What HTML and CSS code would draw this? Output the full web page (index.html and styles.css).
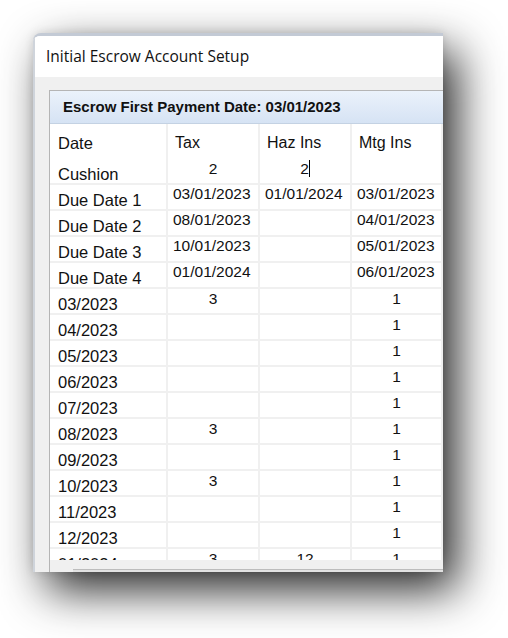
FILE: index.html
```html
<!DOCTYPE html>
<html>
<head>
<meta charset="utf-8">
<link rel="stylesheet" href="styles.css">
</head>
<body>
<div class="page">
  <div class="window">
    <div class="frame-left"></div>
    <div class="main">
      <div class="titlebar">Initial Escrow Account Setup</div>
      <div class="client">
        <div class="panel">
          <div class="panel-head">Escrow First Payment Date: 03/01/2023</div>
          <div class="grid">
            <div class="row head"><div class="c d">Date</div><div class="c h">Tax</div><div class="c h">Haz Ins</div><div class="c h">Mtg Ins</div><div class="c h"></div></div>
            <div class="row"><div class="c d">Cushion</div><div class="c n">2</div><div class="c n"><span class="caret">2</span></div><div class="c n"></div><div class="c n"></div></div>
            <div class="row"><div class="c d">Due Date 1</div><div class="c v">03/01/2023</div><div class="c v">01/01/2024</div><div class="c v">03/01/2023</div><div class="c v"></div></div>
            <div class="row"><div class="c d">Due Date 2</div><div class="c v">08/01/2023</div><div class="c v"></div><div class="c v">04/01/2023</div><div class="c v"></div></div>
            <div class="row"><div class="c d">Due Date 3</div><div class="c v">10/01/2023</div><div class="c v"></div><div class="c v">05/01/2023</div><div class="c v"></div></div>
            <div class="row"><div class="c d">Due Date 4</div><div class="c v">01/01/2024</div><div class="c v"></div><div class="c v">06/01/2023</div><div class="c v"></div></div>
            <div class="row"><div class="c d">03/2023</div><div class="c n">3</div><div class="c n"></div><div class="c n">1</div><div class="c n"></div></div>
            <div class="row"><div class="c d">04/2023</div><div class="c n"></div><div class="c n"></div><div class="c n">1</div><div class="c n"></div></div>
            <div class="row"><div class="c d">05/2023</div><div class="c n"></div><div class="c n"></div><div class="c n">1</div><div class="c n"></div></div>
            <div class="row"><div class="c d">06/2023</div><div class="c n"></div><div class="c n"></div><div class="c n">1</div><div class="c n"></div></div>
            <div class="row"><div class="c d">07/2023</div><div class="c n"></div><div class="c n"></div><div class="c n">1</div><div class="c n"></div></div>
            <div class="row"><div class="c d">08/2023</div><div class="c n">3</div><div class="c n"></div><div class="c n">1</div><div class="c n"></div></div>
            <div class="row"><div class="c d">09/2023</div><div class="c n"></div><div class="c n"></div><div class="c n">1</div><div class="c n"></div></div>
            <div class="row"><div class="c d">10/2023</div><div class="c n">3</div><div class="c n"></div><div class="c n">1</div><div class="c n"></div></div>
            <div class="row"><div class="c d">11/2023</div><div class="c n"></div><div class="c n"></div><div class="c n">1</div><div class="c n"></div></div>
            <div class="row"><div class="c d">12/2023</div><div class="c n"></div><div class="c n"></div><div class="c n">1</div><div class="c n"></div></div>
            <div class="row"><div class="c d">01/2024</div><div class="c n">3</div><div class="c n">12</div><div class="c n">1</div><div class="c n"></div></div>
          </div>
          <div class="hscroll"><div class="thumb"></div></div>
        </div>
      </div>
    </div>
  </div>
</div>
</body>
</html>
```

FILE: styles.css
```css
html, body {
  margin: 0;
  padding: 0;
  background: #ffffff;
}
.page {
  box-sizing: border-box;
  height: 638px;
  padding: 33px 0 0 33px;
}
.window {
  box-sizing: border-box;
  width: 410px;
  height: 539px;
  display: flex;
  overflow: hidden;
  border-top: 3px solid #c3cad5;
  border-top-left-radius: 8px;
  box-shadow: 14px 18px 46px rgba(0, 0, 0, 0.85), 0 0 10px rgba(0, 0, 0, 0.12);
  background: #f0f0f0;
}
.frame-left {
  width: 2px;
  flex: none;
  background: #cfd4db;
}
.main {
  flex: 1;
  min-width: 0;
  display: flex;
  flex-direction: column;
}
.titlebar {
  height: 41px;
  flex: none;
  background: #ffffff;
  padding-left: 11px;
  font-family: "Open Sans", "Noto Sans", sans-serif;
  font-size: 15.5px;
  line-height: 41px;
  color: #111;
}
.client {
  flex: 1;
  min-height: 0;
  background: #f0f0f0;
  padding: 13px 0 0 14px;
  display: flex;
  flex-direction: column;
  overflow: hidden;
}
.panel {
  width: 480px;
  flex: 1;
  display: flex;
  flex-direction: column;
  border-left: 1px solid #b5b5b5;
  border-top: 1px solid #b5b5b5;
  background: #ffffff;
}
.panel-head {
  box-sizing: border-box;
  height: 33px;
  flex: none;
  padding-left: 13px;
  background: linear-gradient(#ebf2fb, #d6e3f4);
  border-bottom: 1px solid #c4d2e3;
  font-family: "Liberation Sans", Arial, sans-serif;
  font-weight: bold;
  font-size: 15px;
  line-height: 32px;
  color: #111;
}
.grid {
  height: 436px;
  flex: none;
  overflow: hidden;
  font-family: "Liberation Sans", Arial, sans-serif;
  color: #111;
}
.row {
  box-sizing: border-box;
  display: grid;
  grid-template-columns: 118px 92px 92px 91px 92px;
  height: 26px;
  border-bottom: 2px solid #f0f0f0;
}
.row.head {
  height: 35px;
  border-bottom: none;
}
.c {
  border-right: 2px solid #f0f0f0;
  white-space: nowrap;
  overflow: hidden;
}
.d {
  font-size: 16.5px;
  line-height: 20px;
  padding: 5px 0 0 8px;
}
.head .d {
  padding-top: 9px;
}
.h {
  font-size: 16px;
  line-height: 20px;
  padding: 9px 0 0 7px;
}
.v {
  font-size: 15.5px;
  line-height: 18px;
  padding: 0 0 0 5px;
}
.n {
  font-size: 15.5px;
  line-height: 19px;
  text-align: center;
}
.caret {
  display: inline-block;
  line-height: 17px;
  border-right: 1px solid #000;
}
.hscroll {
  flex: 1;
  background: #f0f0f0;
  display: flex;
  flex-direction: column;
}
.thumb {
  margin: 9px 0 0 23px;
  flex: 1;
  border-top: 1px solid #bdbdbd;
  background: #e2e2e2;
}
```
